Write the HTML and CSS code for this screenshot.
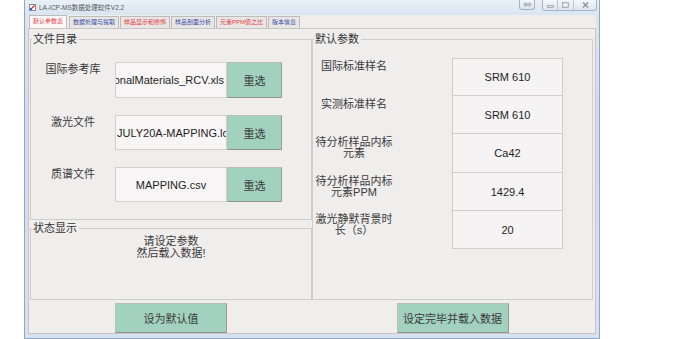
FILE: index.html
```html
<!DOCTYPE html>
<html lang="zh-cn">
<head>
<meta charset="utf-8" />
<title>LA-ICP-MS数据处理软件V2.2</title>
<link rel="stylesheet" href="styles.css">
</head>
<body>
<div class="window">
	<!-- S 标题栏 -->
	<div class="titlebar">
		<svg class="app_icon" width="7" height="7" viewBox="0 0 7 7"><rect x="0.5" y="0.5" width="6" height="6" fill="#fff" stroke="#8a8a8a"/><path d="M1.5 5.5 L5.5 1.5" stroke="#d33" stroke-width="1.4"/><rect x="1" y="4" width="2" height="2" fill="#36c"/></svg>
		<span class="title">LA-ICP-MS数据处理软件V2.2</span>
		<div class="caption">
			<span class="cap_btn cap_swap"><svg width="9" height="5" viewBox="0 0 9 5"><path d="M0.5 2.5 L2.5 0.5 L2.5 1.7 L6.5 1.7 L6.5 0.5 L8.5 2.5 L6.5 4.5 L6.5 3.3 L2.5 3.3 L2.5 4.5 Z" fill="#c9ced6" stroke="#8b929c" stroke-width="0.6"/></svg></span>
			<span class="cap_group">
				<span class="cap_btn cap_min"><svg width="7" height="6" viewBox="0 0 7 6"><rect x="0.5" y="3.5" width="6" height="2" fill="#d8dce2" stroke="#8b929c" stroke-width="0.6"/></svg></span>
				<span class="cap_btn cap_max"><svg width="7" height="6" viewBox="0 0 7 6"><rect x="0.5" y="0.5" width="6" height="5" fill="#d8dce2" stroke="#8b929c" stroke-width="0.6"/><rect x="2" y="2" width="3" height="2" fill="#f4f6f9"/></svg></span>
				<span class="cap_btn cap_close"><svg width="7" height="6" viewBox="0 0 7 6"><path d="M1 0.5 L6 5.5 M6 0.5 L1 5.5" stroke="#8b929c" stroke-width="1.3"/></svg></span>
			</span>
		</div>
	</div>
	<!-- E 标题栏 -->
	<div class="client">
		<ul class="tabs">
			<li class="tab tx_red current">默认参数表</li>
			<li class="tab tx_blue">数据处理与提取</li>
			<li class="tab tx_red">样品显示和修饰</li>
			<li class="tab tx_blue">样品剖面分析</li>
			<li class="tab tx_red">元素PPM值之比</li>
			<li class="tab tx_blue">版本信息</li>
		</ul>
		<div class="tab_page">
			<div class="main">
				<div class="col_left">
					<!-- S 文件目录 -->
					<fieldset class="group group_files">
						<legend>文件目录</legend>
						<div class="file_rows">
							<div class="file_label">国际参考库</div>
							<div class="file_box file_tail"><span>onalMaterials_RCV.xls</span></div>
							<button class="bt_green">重选</button>
							<div class="file_label">激光文件</div>
							<div class="file_box file_head"><span>JULY20A-MAPPING.lo</span></div>
							<button class="bt_green">重选</button>
							<div class="file_label">质谱文件</div>
							<div class="file_box"><span>MAPPING.csv</span></div>
							<button class="bt_green">重选</button>
						</div>
					</fieldset>
					<!-- E 文件目录 -->
					<!-- S 状态显示 -->
					<fieldset class="group group_status">
						<legend>状态显示</legend>
						<p class="status_msg">请设定参数<br />然后载入数据!</p>
					</fieldset>
					<!-- E 状态显示 -->
				</div>
				<!-- S 默认参数 -->
				<fieldset class="group group_params">
					<legend>默认参数</legend>
					<div class="params">
						<div class="param_row">
							<div class="param_label">国际标准样名</div>
							<div class="param_val">SRM 610</div>
						</div>
						<div class="param_row">
							<div class="param_label">实测标准样名</div>
							<div class="param_val">SRM 610</div>
						</div>
						<div class="param_row param_tall">
							<div class="param_label">待分析样品内标<br />元素</div>
							<div class="param_val">Ca42</div>
						</div>
						<div class="param_row">
							<div class="param_label">待分析样品内标<br />元素PPM</div>
							<div class="param_val">1429.4</div>
						</div>
						<div class="param_row">
							<div class="param_label">激光静默背景时<br />长（s）</div>
							<div class="param_val">20</div>
						</div>
					</div>
				</fieldset>
				<!-- E 默认参数 -->
			</div>
			<div class="bottom_bar">
				<button class="bt_green bt_big">设为默认值</button>
				<button class="bt_green bt_big">设定完毕并载入数据</button>
			</div>
		</div>
	</div>
</div>
</body>
</html>
```

FILE: styles.css
```css
body{margin:0;background:#FFFFFF;font-family:"Liberation Sans","Noto Sans CJK SC",sans-serif;color:#333333;}
ul,p{margin:0;padding:0;list-style:none;}

/* S 窗口 */
.window{display:flex;flex-direction:column;box-sizing:border-box;width:576px;height:339px;margin-left:24px;padding:0 3px 4px;border:1px solid #8FA8C4;border-top:0;background:linear-gradient(180deg,#E9F0F8 0,#D9E5F1 15px,#CFDDEC 120px,#D6E2EF 339px);}
.titlebar{display:flex;align-items:center;height:15px;flex:none;}
.titlebar .app_icon{margin:0 3px 0 1px;}
.titlebar .title{font-size:6.5px;line-height:8px;color:#555A62;}
.caption{display:flex;align-self:flex-start;gap:7px;margin:0 -1px 0 auto;}
.cap_btn{display:flex;align-items:center;justify-content:center;height:10px;box-sizing:border-box;background:linear-gradient(180deg,#F4F7FB,#DCE5EF);}
.cap_swap{width:16px;border:1px solid #A3B2C4;border-top:0;border-radius:0 0 3px 3px;}
.cap_group{display:flex;border:1px solid #A3B2C4;border-top:0;border-radius:0 0 3px 3px;overflow:hidden;}
.cap_min{width:15px;border-right:1px solid #B8C4D2;}
.cap_max{width:16px;border-right:1px solid #B8C4D2;}
.cap_close{width:22px;}
/* E 窗口 */

/* S 选项卡 */
.client{display:flex;flex-direction:column;flex:1;background:#F0EDED;}
.tabs{display:flex;align-items:flex-end;height:13px;padding-left:1px;background:#F0EDED;}
.tab{height:11px;margin-right:1px;padding:0 3px;border:1px solid #BFBBBB;border-bottom:0;background:#E9E6E6;font-size:6px;line-height:11px;white-space:nowrap;}
.tab.current{height:12px;margin-right:2px;background:#FBFAFA;}
.tx_red{color:#E23A3A;}
.tx_blue{color:#3A4DA6;}
.tab_page{flex:1;box-sizing:border-box;padding:4px 2px 0 1px;border:1px solid #C9C5C5;background:#F0EDED;}
/* E 选项卡 */

/* S 分组框 */
.main{display:flex;height:267px;}
.col_left{display:flex;flex-direction:column;gap:2px;width:282px;}
.group{box-sizing:border-box;min-width:0;margin:0;padding:0;border:1px solid #D0CCCC;}
.group legend{margin-left:1px;padding:0 2px 0 1px;font-size:11px;line-height:12px;color:#333333;}
.group_files{height:187px;}
.group_status{height:78px;}
.group_params{width:281px;height:267px;}
/* E 分组框 */

/* S 文件目录 */
.file_rows{display:grid;grid-template-columns:84px 112px 55px;grid-template-rows:36px 35px 35px;row-gap:17px;margin-top:17px;}
.file_label{padding-top:1px;font-size:11px;line-height:12px;text-align:center;color:#3A3A3A;}
.file_box{display:flex;align-items:center;justify-content:center;overflow:hidden;box-sizing:border-box;border:1px solid #D3CFCF;background:#F7F5F5;font-size:11px;color:#1E1E1E;white-space:nowrap;}
.file_tail{justify-content:flex-end;padding-right:2px;}
.file_head{justify-content:flex-start;padding-left:1px;}
.bt_green{box-sizing:border-box;margin:0;padding:0;border:1px solid #B9BEBC;border-right-color:#979B99;border-bottom-color:#8E9290;background:#A2D1BF;font-family:"Liberation Sans","Noto Sans CJK SC",sans-serif;font-size:11px;color:#3A3A3A;}
/* E 文件目录 */

.status_msg{margin-top:1px;font-size:11px;line-height:12px;text-align:center;color:#3A3A3A;}

/* S 默认参数 */
.params{margin-top:13px;}
.param_row{display:flex;gap:57px;height:38px;}
.param_tall{height:39px;}
.param_label{width:82px;padding-top:3px;font-size:11px;line-height:11px;text-align:center;color:#3A3A3A;}
.param_val{display:flex;align-items:center;justify-content:center;width:111px;box-sizing:border-box;border:1px solid #D1CDCD;border-top:0;background:#F5F3F3;font-size:11px;color:#1E1E1E;}
.param_row:first-child .param_val{border-top:1px solid #D1CDCD;}
/* E 默认参数 */

.bottom_bar{display:grid;grid-template-columns:282px 281px;padding-top:3px;}
.bt_big{justify-self:center;width:112px;height:30px;}
```
